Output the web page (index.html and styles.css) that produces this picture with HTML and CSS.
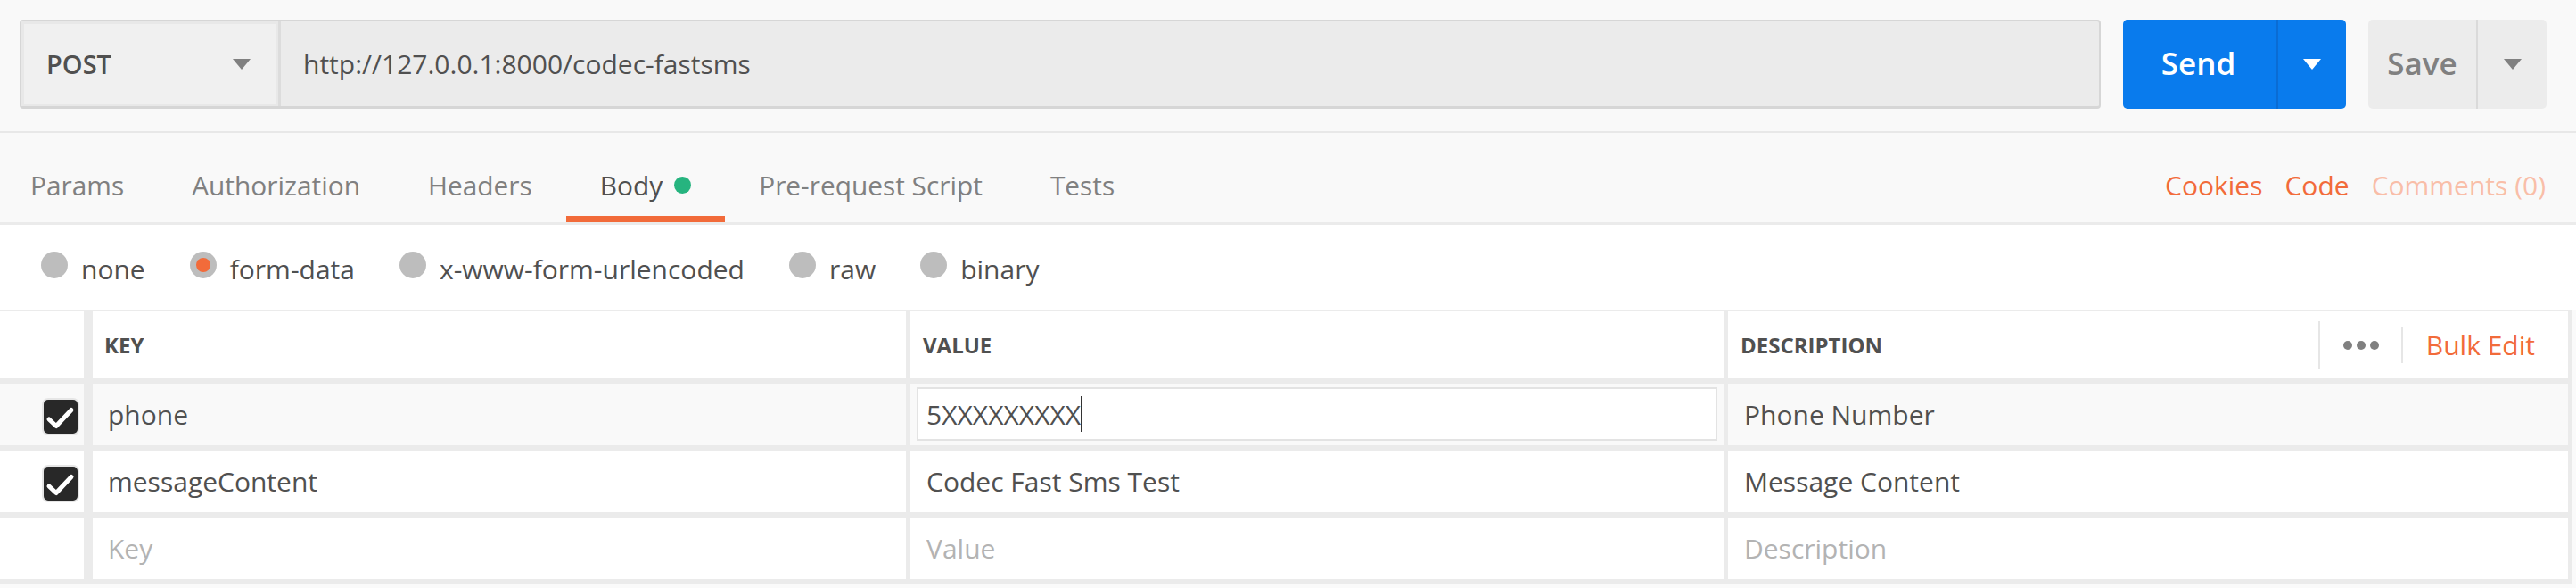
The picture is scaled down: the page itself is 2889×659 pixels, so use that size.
FILE: index.html
```html
<!DOCTYPE html>
<html lang="en">
<head>
<meta charset="utf-8">
<title>Request builder</title>
<link rel="stylesheet" href="styles.css">
</head>
<body>
<div class="app">
  <header class="topbar">
    <div class="url-group">
      <div class="method">
        <span>POST</span>
        <svg class="caret" width="20" height="12" viewBox="0 0 20 12"><path d="M0 0H20L10 12Z" fill="#808080"/></svg>
      </div>
      <div class="url">http://127.0.0.1:8000/codec-fastsms</div>
    </div>
    <div class="btn send">
      <span class="btn-label">Send</span>
      <span class="btn-caret"><svg width="20" height="12" viewBox="0 0 20 12"><path d="M0 0H20L10 12Z" fill="#ffffff"/></svg></span>
    </div>
    <div class="btn save">
      <span class="btn-label">Save</span>
      <span class="btn-caret"><svg width="20" height="12" viewBox="0 0 20 12"><path d="M0 0H20L10 12Z" fill="#808080"/></svg></span>
    </div>
  </header>

  <nav class="tabs">
    <div class="tab first">Params</div>
    <div class="tab">Authorization</div>
    <div class="tab">Headers</div>
    <div class="tab active">Body<span class="dot"></span></div>
    <div class="tab">Pre-request Script</div>
    <div class="tab">Tests</div>
    <div class="tab-links">
      <span>Cookies</span>
      <span>Code</span>
      <span class="muted">Comments (0)</span>
    </div>
  </nav>

  <div class="body-types">
    <label class="option"><span class="radio"></span>none</label>
    <label class="option"><span class="radio checked"></span>form-data</label>
    <label class="option"><span class="radio"></span>x-www-form-urlencoded</label>
    <label class="option"><span class="radio"></span>raw</label>
    <label class="option"><span class="radio"></span>binary</label>
  </div>

  <div class="kv">
    <div class="kv-row head">
      <div class="cell check"></div>
      <div class="cell key">KEY</div>
      <div class="cell">VALUE</div>
      <div class="cell desc">
        <span>DESCRIPTION</span>
        <div class="head-actions">
          <span class="vsep tall"></span>
          <span class="dots"><i></i><i></i><i></i></span>
          <span class="vsep"></span>
          <span class="bulk">Bulk Edit</span>
        </div>
      </div>
    </div>
    <div class="kv-row hover">
      <div class="cell check"><span class="checkbox"><svg width="38" height="38" viewBox="0 0 38 38"><polyline points="6,22 14,29.5 31,11.5" fill="none" stroke="#fff" stroke-width="5" stroke-linecap="round" stroke-linejoin="round"/></svg></span></div>
      <div class="cell key">phone</div>
      <div class="cell editing"><div class="input">5XXXXXXXXX<span class="cursor"></span></div></div>
      <div class="cell">Phone Number</div>
    </div>
    <div class="kv-row">
      <div class="cell check"><span class="checkbox"><svg width="38" height="38" viewBox="0 0 38 38"><polyline points="6,22 14,29.5 31,11.5" fill="none" stroke="#fff" stroke-width="5" stroke-linecap="round" stroke-linejoin="round"/></svg></span></div>
      <div class="cell key">messageContent</div>
      <div class="cell">Codec Fast Sms Test</div>
      <div class="cell">Message Content</div>
    </div>
    <div class="kv-row">
      <div class="cell check"></div>
      <div class="cell key placeholder">Key</div>
      <div class="cell placeholder">Value</div>
      <div class="cell placeholder">Description</div>
    </div>
  </div>
</div>
</body>
</html>
```

FILE: styles.css
```css
html, body {
  margin: 0;
  padding: 0;
}

body {
  font-family: "Open Sans", "DejaVu Sans", sans-serif;
  color: #505050;
  background: #fafafa;
}

.app {
  display: flex;
  flex-direction: column;
  min-height: 659px;
  background: #fafafa;
}

/* ---------- top bar ---------- */
.topbar {
  display: flex;
  gap: 25px;
  padding: 22px 33px 25px 22px;
  background: #f9f9f9;
  border-bottom: 2px solid #e8e8e8;
}

.url-group {
  flex: 1;
  display: flex;
  height: 100px;
  box-sizing: border-box;
  border: 2px solid #d6d6d6;
  border-bottom-width: 3px;
  border-radius: 4px;
  background: #ebebeb;
}

.method {
  width: 291px;
  box-sizing: border-box;
  display: flex;
  align-items: center;
  justify-content: space-between;
  padding: 0 31px 0 28px;
  background: #f0f0f0;
  box-shadow: inset 0 0 0 3px #e8e8e8;
  border-right: 3px solid #dcdcdc;
  font-size: 29px;
  font-weight: 600;
  color: #505050;
}

.url {
  flex: 1;
  display: flex;
  align-items: center;
  padding-left: 25px;
  font-size: 30px;
  color: #505050;
}

.btn {
  display: flex;
  height: 100px;
  border-radius: 5px;
}

.btn-label {
  display: flex;
  align-items: center;
  justify-content: center;
  padding-bottom: 3px;
  box-sizing: border-box;
  font-size: 35px;
  font-weight: 600;
}

.btn-caret {
  flex: 1;
  display: flex;
  align-items: center;
  justify-content: center;
}

.send {
  width: 250px;
  background: #097bed;
  color: #ffffff;
}

.send .btn-label {
  width: 174px;
  padding-right: 3px;
  border-right: 2px solid #0a6cd4;
}

.save {
  width: 200px;
  background: #ececec;
  color: #808080;
}

.save .btn-label {
  width: 123px;
  border-right: 2px solid #dadada;
}

/* ---------- tabs ---------- */
.tabs {
  display: flex;
  height: 103px;
  box-sizing: border-box;
  border-bottom: 3px solid #ebebeb;
  background: #f9f9f9;
}

.tab {
  display: flex;
  align-items: center;
  padding: 24px 38px 0;
  border-bottom: 7px solid transparent;
  font-size: 29.85px;
  color: #808080;
  white-space: nowrap;
}

.tab.first {
  padding-left: 34px;
}

.tab.active {
  color: #505050;
  border-bottom-color: #f26b3a;
}

.dot {
  width: 19px;
  height: 19px;
  border-radius: 50%;
  background: #26b47f;
  margin-left: 13px;
}

.tab-links {
  margin-left: auto;
  display: flex;
  align-items: center;
  gap: 25px;
  padding: 24px 34px 7px 0;
  font-size: 30px;
  color: #f26b3a;
}

.tab-links .muted {
  color: #f9bea8;
}

/* ---------- body types ---------- */
.body-types {
  display: flex;
  align-items: center;
  gap: 50px;
  height: 95px;
  box-sizing: border-box;
  padding: 3px 0 0 46px;
  background: #ffffff;
}

.option {
  display: flex;
  align-items: center;
  gap: 15px;
  font-size: 30px;
  color: #505050;
}

.radio {
  width: 30px;
  height: 30px;
  border-radius: 50%;
  background: #bdbdbd;
  margin-bottom: 9px;
  display: flex;
  align-items: center;
  justify-content: center;
}

.radio.checked::after {
  content: "";
  width: 16px;
  height: 16px;
  border-radius: 50%;
  background: #f26b3a;
}

/* ---------- key/value table ---------- */
.kv {
  display: flex;
  flex-direction: column;
  gap: 6px;
  padding: 2px 4px 6px 0;
  margin-right: 5px;
  background: #ebebeb;
}

.kv-row {
  display: grid;
  grid-template-columns: 94px 917px 912px 1fr;
  column-gap: 5px;
  height: 69px;
}

.kv-row.head {
  height: 75px;
}

.cell {
  display: flex;
  align-items: center;
  padding-left: 18px;
  background: #ffffff;
  font-size: 30px;
  color: #505050;
  white-space: nowrap;
}

.cell.key {
  border-left: 5px solid #ebebeb;
  padding-left: 17px;
}

.head .cell {
  padding-left: 14px;
  font-size: 24px;
  font-weight: 700;
}

.head .cell.key {
  padding-left: 13px;
}

.hover .cell {
  background: #f9f9f9;
}

.cell.check {
  padding: 0 7px 0 0;
  justify-content: flex-end;
}

.head .cell.check {
  padding: 0;
}

.checkbox {
  width: 38px;
  height: 38px;
  margin-top: 4px;
  border-radius: 5px;
  background: #282828;
  box-shadow: 0 0 0 2px #e6e6e6;
  display: flex;
}

.cell.editing {
  padding: 4px 7px 5px;
  align-items: stretch;
}

.input {
  flex: 1;
  display: flex;
  align-items: center;
  padding-left: 9px;
  background: #ffffff;
  border: 2px solid #e3e3e3;
}

.cursor {
  width: 2px;
  height: 40px;
  background: #333333;
}

.placeholder {
  color: #b3b3b3;
}

.cell.desc {
  justify-content: space-between;
}

.head-actions {
  display: flex;
  align-items: center;
  height: 100%;
  padding-right: 37px;
}

.vsep {
  width: 2px;
  height: 40px;
  background: #e6e6e6;
}

.vsep.tall {
  height: 54px;
}

.dots {
  display: flex;
  gap: 5px;
  margin: 0 25px 0 26px;
}

.dots i {
  width: 10px;
  height: 10px;
  border-radius: 50%;
  background: #808080;
}

.bulk {
  margin-left: 26px;
  font-size: 30px;
  font-weight: 400;
  color: #f26b3a;
}
```
